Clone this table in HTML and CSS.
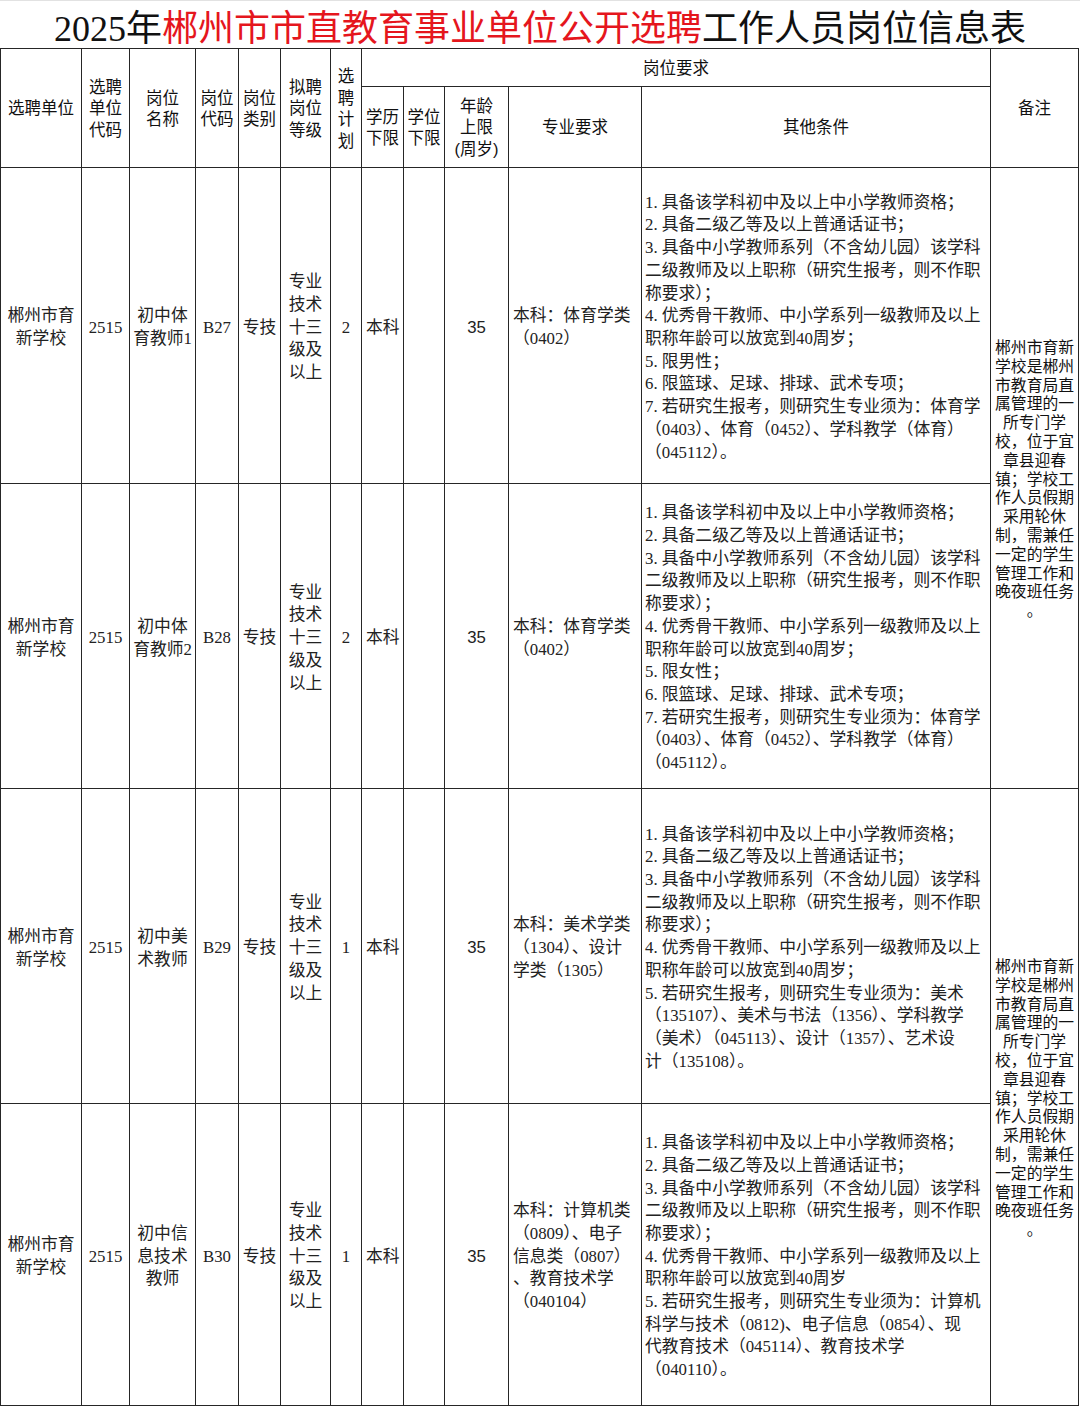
FILE: index.html
```html
<!DOCTYPE html>
<html lang="zh-CN">
<head>
<meta charset="utf-8">
<title>2025年郴州市市直教育事业单位公开选聘工作人员岗位信息表</title>
<link rel="stylesheet" href="styles.css">
</head>
<body>
<h1 class="title"><span class="num">2025</span>年<span class="red">郴州市市直教育事业单位公开选聘</span>工作人员岗位信息表</h1>
<table class="grid">
  <colgroup>
    <col class="w81"><col class="w48"><col class="w66"><col class="w43"><col class="w42"><col class="w50"><col class="w31"><col class="w42"><col class="w41"><col class="w64"><col class="w133"><col class="w349"><col class="w88">
  </colgroup>
  <thead>
    <tr class="hr1">
      <th rowspan="2">选聘单位</th>
      <th rowspan="2">选聘<br>单位<br>代码</th>
      <th rowspan="2">岗位<br>名称</th>
      <th rowspan="2">岗位<br>代码</th>
      <th rowspan="2">岗位<br>类别</th>
      <th rowspan="2">拟聘<br>岗位<br>等级</th>
      <th rowspan="2">选<br>聘<br>计<br>划</th>
      <th colspan="5">岗位要求</th>
      <th rowspan="2">备注</th>
    </tr>
    <tr class="hr2">
      <th>学历<br>下限</th>
      <th>学位<br>下限</th>
      <th>年龄<br>上限<br>(周岁)</th>
      <th>专业要求</th>
      <th>其他条件</th>
    </tr>
  </thead>
  <tbody>
    <tr class="r1">
      <td class="c">郴州市育<br>新学校</td>
      <td class="c">2515</td>
      <td class="c">初中体<br>育教师1</td>
      <td class="c">B27</td>
      <td class="c">专技</td>
      <td class="c">专业<br>技术<br>十三<br>级及<br>以上</td>
      <td class="c">2</td>
      <td class="l">本科</td>
      <td></td>
      <td class="c sans">35</td>
      <td class="l">本科：体育学类<br>（0402）</td>
      <td class="l nw">1. 具备该学科初中及以上中小学教师资格；<br>2. 具备二级乙等及以上普通话证书；<br>3. 具备中小学教师系列（不含幼儿园）该学科<br>二级教师及以上职称（研究生报考，则不作职<br>称要求）；<br>4. 优秀骨干教师、中小学系列一级教师及以上<br>职称年龄可以放宽到40周岁；<br>5. 限男性；<br>6. 限篮球、足球、排球、武术专项；<br>7. 若研究生报考，则研究生专业须为：体育学<br>（0403）、体育（0452）、学科教学（体育）<br>（045112）。</td>
      <td rowspan="2" class="note">郴州市育新<br>学校是郴州<br>市教育局直<br>属管理的一<br>所专门学<br>校，位于宜<br>章县迎春<br>镇；学校工<br>作人员假期<br>采用轮休<br>制，需兼任<br>一定的学生<br>管理工作和<br>晚夜班任务<br>。</td>
    </tr>
    <tr class="r2">
      <td class="c">郴州市育<br>新学校</td>
      <td class="c">2515</td>
      <td class="c">初中体<br>育教师2</td>
      <td class="c">B28</td>
      <td class="c">专技</td>
      <td class="c">专业<br>技术<br>十三<br>级及<br>以上</td>
      <td class="c">2</td>
      <td class="l">本科</td>
      <td></td>
      <td class="c sans">35</td>
      <td class="l">本科：体育学类<br>（0402）</td>
      <td class="l nw">1. 具备该学科初中及以上中小学教师资格；<br>2. 具备二级乙等及以上普通话证书；<br>3. 具备中小学教师系列（不含幼儿园）该学科<br>二级教师及以上职称（研究生报考，则不作职<br>称要求）；<br>4. 优秀骨干教师、中小学系列一级教师及以上<br>职称年龄可以放宽到40周岁；<br>5. 限女性；<br>6. 限篮球、足球、排球、武术专项；<br>7. 若研究生报考，则研究生专业须为：体育学<br>（0403）、体育（0452）、学科教学（体育）<br>（045112）。</td>
    </tr>
    <tr class="r3">
      <td class="c">郴州市育<br>新学校</td>
      <td class="c">2515</td>
      <td class="c">初中美<br>术教师</td>
      <td class="c">B29</td>
      <td class="c">专技</td>
      <td class="c">专业<br>技术<br>十三<br>级及<br>以上</td>
      <td class="c">1</td>
      <td class="l">本科</td>
      <td></td>
      <td class="c sans">35</td>
      <td class="l">本科：美术学类<br>（1304）、设计<br>学类（1305）</td>
      <td class="l nw">1. 具备该学科初中及以上中小学教师资格；<br>2. 具备二级乙等及以上普通话证书；<br>3. 具备中小学教师系列（不含幼儿园）该学科<br>二级教师及以上职称（研究生报考，则不作职<br>称要求）；<br>4. 优秀骨干教师、中小学系列一级教师及以上<br>职称年龄可以放宽到40周岁；<br>5. 若研究生报考，则研究生专业须为：美术<br>（135107）、美术与书法（1356）、学科教学<br>（美术）（045113）、设计（1357）、艺术设<br>计（135108）。</td>
      <td rowspan="2" class="note">郴州市育新<br>学校是郴州<br>市教育局直<br>属管理的一<br>所专门学<br>校，位于宜<br>章县迎春<br>镇；学校工<br>作人员假期<br>采用轮休<br>制，需兼任<br>一定的学生<br>管理工作和<br>晚夜班任务<br>。</td>
    </tr>
    <tr class="r4">
      <td class="c">郴州市育<br>新学校</td>
      <td class="c">2515</td>
      <td class="c">初中信<br>息技术<br>教师</td>
      <td class="c">B30</td>
      <td class="c">专技</td>
      <td class="c">专业<br>技术<br>十三<br>级及<br>以上</td>
      <td class="c">1</td>
      <td class="l">本科</td>
      <td></td>
      <td class="c sans">35</td>
      <td class="l">本科：计算机类<br>（0809）、电子<br>信息类（0807）<br>、教育技术学<br>（040104）</td>
      <td class="l nw">1. 具备该学科初中及以上中小学教师资格；<br>2. 具备二级乙等及以上普通话证书；<br>3. 具备中小学教师系列（不含幼儿园）该学科<br>二级教师及以上职称（研究生报考，则不作职<br>称要求）；<br>4. 优秀骨干教师、中小学系列一级教师及以上<br>职称年龄可以放宽到40周岁<br>5. 若研究生报考，则研究生专业须为：计算机<br>科学与技术（0812)、电子信息（0854）、现<br>代教育技术（045114）、教育技术学<br>（040110）。</td>
    </tr>
  </tbody>
</table>
</body>
</html>
```
FILE: styles.css
```css
html, body {
  margin: 0;
  padding: 0;
  background: #ffffff;
}

body {
  width: 1080px;
  color: #1a1a1a;
  font-family: "Liberation Serif", "Noto Sans CJK SC", serif;
}

.title {
  margin: 0;
  height: 48px;
  padding-top: 1px;
  border-top: 1px solid #e2e2e2;
  box-sizing: border-box;
  line-height: 47px;
  text-align: center;
  font-family: "Noto Sans CJK SC", sans-serif;
  font-size: 36px;
  font-weight: 400;
  color: #111111;
  white-space: nowrap;
}

.title .num {
  font-family: "Liberation Serif", serif;
}

.title .red {
  color: #e5161d;
}

.grid {
  width: 1078px;
  border-collapse: collapse;
  table-layout: fixed;
}

.grid th,
.grid td {
  border: 1px solid #262626;
  padding: 0;
  vertical-align: middle;
}

.w81 { width: 81px; }
.w48 { width: 48px; }
.w66 { width: 66px; }
.w43 { width: 43px; }
.w42 { width: 42px; }
.w50 { width: 50px; }
.w31 { width: 31px; }
.w41 { width: 41px; }
.w64 { width: 64px; }
.w133 { width: 133px; }
.w349 { width: 349px; }
.w88 { width: 88px; }

.grid th {
  font-family: "Liberation Sans", "Noto Sans CJK SC", sans-serif;
  font-size: 16.5px;
  line-height: 21.5px;
  font-weight: 400;
  color: #111111;
  text-align: center;
  white-space: nowrap;
  padding-top: 2px;
}

.hr1 { height: 38px; }
.hr2 { height: 81px; }
.r1 { height: 316px; }
.r2 { height: 305px; }
.r3 { height: 315px; }
.r4 { height: 302px; }

.grid td {
  font-size: 16.8px;
  line-height: 22.7px;
  color: #222222;
  padding-top: 5px;
}

.grid td.c {
  text-align: center;
  white-space: nowrap;
}

.grid td.l {
  text-align: left;
  padding-left: 4px;
  white-space: nowrap;
}

.grid td.nw {
  padding-left: 3px;
}

.grid td.sans {
  font-family: "Liberation Sans", "Noto Sans CJK SC", sans-serif;
}

.grid td.note {
  font-family: "Liberation Sans", "Noto Sans CJK SC", sans-serif;
  font-size: 15.8px;
  line-height: 18.8px;
  text-align: center;
  white-space: nowrap;
  color: #111111;
  padding-top: 4px;
}
```
